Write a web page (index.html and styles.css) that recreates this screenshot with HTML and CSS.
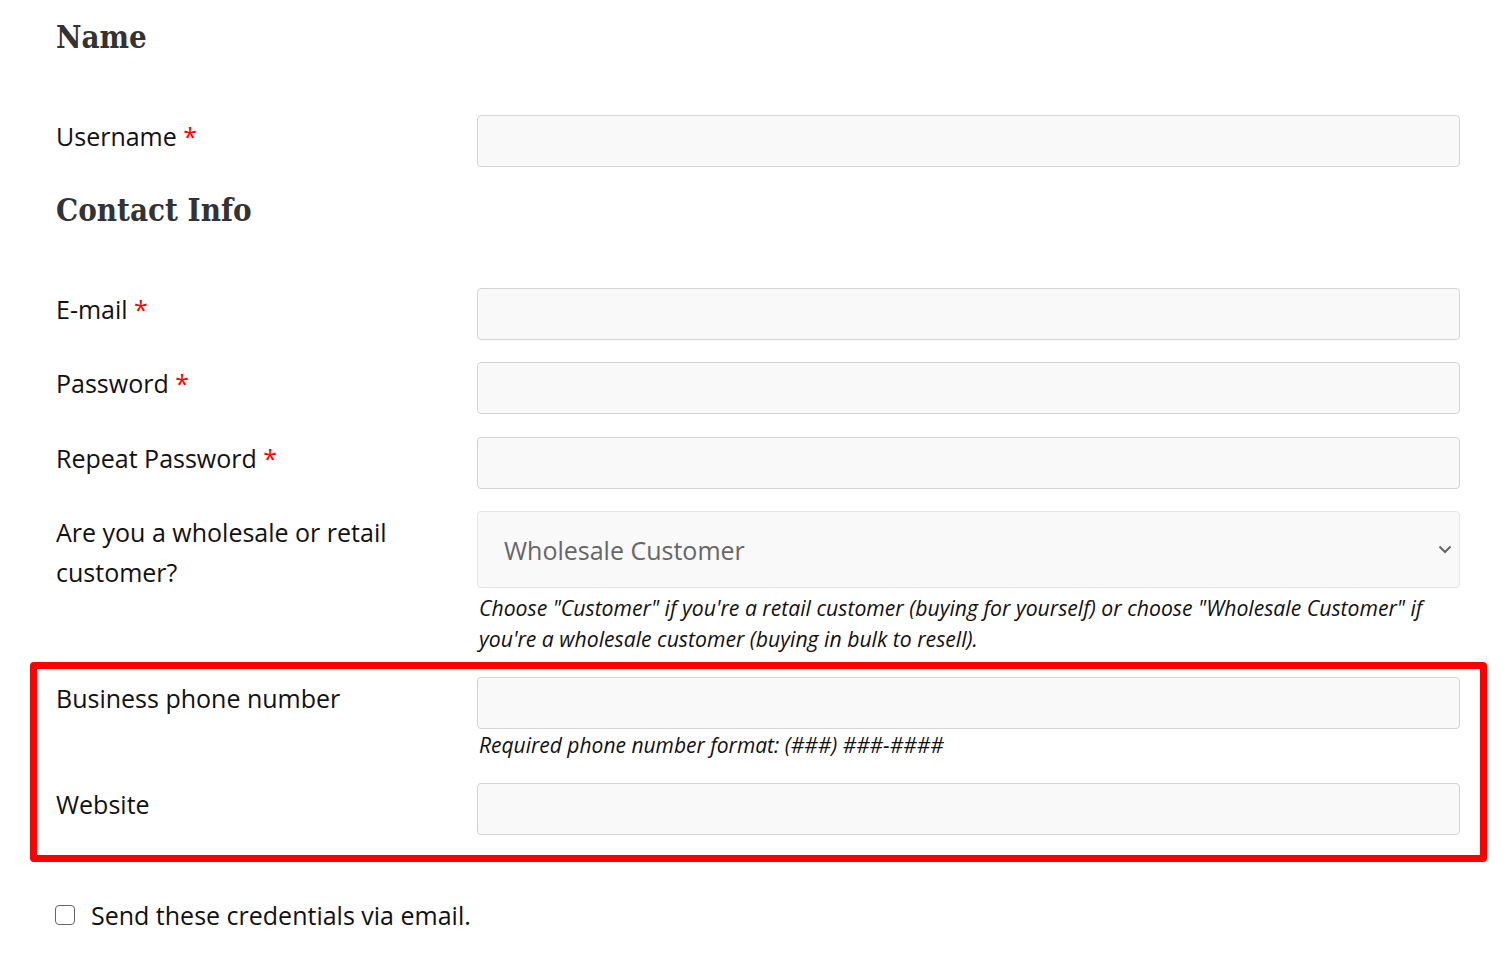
FILE: index.html
```html
<!DOCTYPE html>
<html>
<head>
<meta charset="utf-8">
<link rel="stylesheet" href="styles.css">
</head>
<body>
<div class="form">
  <h2 class="heading">Name</h2>
  <div class="row">
    <label class="label">Username <span class="req">*</span></label>
    <div class="field"><input class="input" type="text"></div>
  </div>
  <h2 class="heading heading-contact">Contact Info</h2>
  <div class="row">
    <label class="label">E-mail <span class="req">*</span></label>
    <div class="field"><input class="input" type="text"></div>
  </div>
  <div class="row row-password">
    <label class="label">Password <span class="req">*</span></label>
    <div class="field"><input class="input" type="password"></div>
  </div>
  <div class="row">
    <label class="label">Repeat Password <span class="req">*</span></label>
    <div class="field"><input class="input" type="password"></div>
  </div>
  <div class="row row-select">
    <label class="label">Are you a wholesale or retail customer?</label>
    <div class="field">
      <div class="select">
        <span class="select-value">Wholesale Customer</span>
        <svg class="chevron" width="14" height="9" viewBox="0 0 14 9"><path d="M1.5 1.5 L7 7 L12.5 1.5" fill="none" stroke="#666" stroke-width="2"/></svg>
      </div>
      <p class="desc">Choose "Customer" if you're a retail customer (buying for yourself) or choose "Wholesale Customer" if you're a wholesale customer (buying in bulk to resell).</p>
    </div>
  </div>
  <div class="highlight">
    <div class="row">
      <label class="label">Business phone number</label>
      <div class="field">
        <input class="input" type="text">
        <p class="desc desc-phone">Required phone number format: (###) ###-####</p>
      </div>
    </div>
    <div class="row row-website">
      <label class="label">Website</label>
      <div class="field"><input class="input" type="text"></div>
    </div>
  </div>
  <label class="check">
    <span class="checkbox"></span>
    <span class="check-text">Send these credentials via email.</span>
  </label>
</div>
</body>
</html>
```

FILE: styles.css
```css
* { box-sizing: border-box; }
html, body { margin: 0; padding: 0; background: #fff; }
body {
  font-family: "Open Sans", "Liberation Sans", sans-serif;
  color: #111;
  font-size: 25px;
}
.form {
  width: 1460px;
  padding-left: 56px;
}
.heading {
  font-family: "DejaVu Serif Condensed", "DejaVu Serif", serif;
  font-stretch: condensed;
  font-weight: bold;
  font-size: 31px;
  line-height: 40px;
  color: #333;
  margin: 17px 0 58px;
}
.heading-contact { margin: 23px 0 58px; }
.row {
  display: grid;
  grid-template-columns: 421px 1fr;
  margin-bottom: 22px;
}
.row-password { margin-bottom: 23px; }
.row-select { margin-bottom: 0; }
.label {
  line-height: 40px;
  padding-top: 1px;
  padding-right: 30px;
  color: #111;
}
.req { color: #ff0000; }
.field { min-width: 0; }
.input {
  display: block;
  width: 100%;
  height: 52px;
  background: #f9f9f9;
  border: 1px solid #d4d4d4;
  border-radius: 4px;
  margin: 0;
}
.select {
  height: 77px;
  background: #f9f9f9;
  border: 1px solid #e6e6e6;
  border-radius: 4px;
  display: flex;
  align-items: center;
  justify-content: space-between;
  padding: 0 7px 0 26px;
}
.select-value { color: #666; font-size: 25px; }
.chevron { display: block; }
.desc {
  margin: 4px 0 0 2px;
  font-style: italic;
  font-size: 21.2px;
  line-height: 31px;
  color: #111;
}
.highlight {
  margin: 8px -27px 0 -26px;
  border: 7px solid #ff0000;
  border-radius: 4px;
  padding: 8px 20px 20px 19px;
}
.highlight .row { margin-bottom: 0; }
.desc-phone { margin-top: 1px; font-size: 21px; }
.row-website { margin-top: 22px; }
.check {
  display: flex;
  align-items: center;
  margin-top: 33px;
  height: 40px;
}
.checkbox {
  width: 20px;
  height: 20px;
  border: 1.5px solid #666;
  border-radius: 4px;
  margin-right: 16px;
  margin-left: -1px;
}
.check-text { color: #111; }
```
